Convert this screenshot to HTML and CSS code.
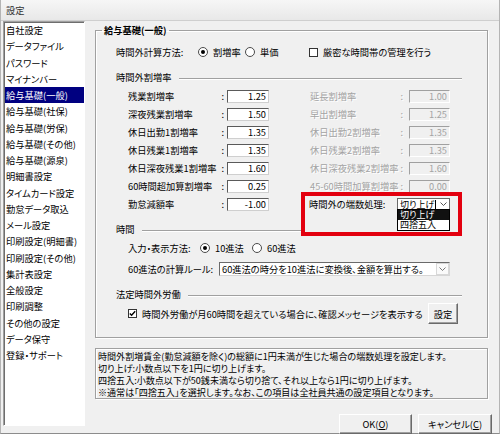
FILE: index.html
```html
<!DOCTYPE html>
<html lang="ja">
<head>
    <meta charset="UTF-8">
    <meta name="viewport" content="width=device-width, initial-scale=1.0">
    <title>設定</title>

    <link rel="stylesheet" href="styles.css">
</head>
<body>
<div class="window">
    <div class="titlebar">設定</div>

    <div class="content">
        <!-- 左側の設定メニュー -->
        <ul class="nav">
            <li>自社設定</li>
            <li>データファイル</li>
            <li>パスワード</li>
            <li>マイナンバー</li>
            <li class="active">給与基礎(一般)</li>
            <li>給与基礎(社保)</li>
            <li>給与基礎(労保)</li>
            <li>給与基礎(その他)</li>
            <li>給与基礎(源泉)</li>
            <li>明細書設定</li>
            <li>タイムカード設定</li>
            <li>勤怠データ取込</li>
            <li>メール設定</li>
            <li>印刷設定(明細書)</li>
            <li>印刷設定(その他)</li>
            <li>集計表設定</li>
            <li>全般設定</li>
            <li>印刷調整</li>
            <li>その他の設定</li>
            <li>データ保守</li>
            <li>登録・サポート</li>
        </ul>

        <div class="main">
            <fieldset class="group">
                <legend>給与基礎(一般)</legend>

                <div class="row method">
                    <span class="label">時間外計算方法:</span>
                    <span class="opt"><i class="radio on"></i>割増率</span>
                    <span class="opt"><i class="radio"></i>単価</span>
                    <span class="opt"><i class="check"></i>厳密な時間帯の管理を行う</span>
                </div>

                <div class="sub">時間外割増率</div>

                <div class="rates">
                    <span class="label">残業割増率<b>:</b></span>
                    <span class="num">1.25</span>
                    <span class="label off">延長割増率<b>:</b></span>
                    <span class="num off">1.00</span>

                    <span class="label">深夜残業割増率<b>:</b></span>
                    <span class="num">1.50</span>
                    <span class="label off">早出割増率<b>:</b></span>
                    <span class="num off">1.25</span>

                    <span class="label">休日出勤1割増率<b>:</b></span>
                    <span class="num">1.35</span>
                    <span class="label off">休日出勤2割増率<b>:</b></span>
                    <span class="num off">1.35</span>

                    <span class="label">休日残業1割増率<b>:</b></span>
                    <span class="num">1.35</span>
                    <span class="label off">休日残業2割増率<b>:</b></span>
                    <span class="num off">1.35</span>

                    <span class="label">休日深夜残業1割増率<b>:</b></span>
                    <span class="num">1.60</span>
                    <span class="label off">休日深夜残業2割増率<b>:</b></span>
                    <span class="num off">1.60</span>

                    <span class="label">60時間超加算割増率<b>:</b></span>
                    <span class="num">0.25</span>
                    <span class="label off">45-60時間加算割増率<b>:</b></span>
                    <span class="num off">0.00</span>

                    <span class="label">勤怠減額率<b>:</b></span>
                    <span class="num">-1.00</span>
                    <div class="round">
                        <span class="annot"></span>
                        <span class="round-label">時間外の端数処理:</span>
                        <div class="combo small">
                            <span class="val">切り上げ</span><i class="caret"></i>
                            <svg class="chev" width="7" height="4" viewBox="0 0 7 4"><polyline points="0.5,0.5 3.5,3.5 6.5,0.5" fill="none" stroke="#555" stroke-width="1"/></svg>
                            <ul class="droplist">
                                <li class="hl">切り上げ</li>
                                <li>四捨五入</li>
                            </ul>
                        </div>
                    </div>
                </div>

                <div class="sub">時間</div>

                <div class="row inputmode">
                    <span class="label">入力・表示方法:</span>
                    <span class="opt"><i class="radio on"></i>10進法</span>
                    <span class="opt"><i class="radio"></i>60進法</span>
                </div>

                <div class="row rule">
                    <span class="label">60進法の計算ルール:</span>
                    <div class="combo wide">
                        <span class="val">60進法の時分を10進法に変換後、金額を算出する。</span>
                        <span class="drop"><svg width="7" height="4" viewBox="0 0 7 4"><polyline points="0.5,0.5 3.5,3.5 6.5,0.5" fill="none" stroke="#777" stroke-width="1"/></svg></span>
                    </div>
                </div>

                <div class="sub">法定時間外労働</div>

                <div class="row legal">
                    <span class="opt"><i class="check on"><svg width="7" height="7" viewBox="0 0 7 7"><polyline points="0.8,3.4 2.6,5.2 6.2,1.2" fill="none" stroke="#000" stroke-width="1.4"/></svg></i>時間外労働が月60時間を超えている場合に、確認メッセージを表示する</span>
                    <button class="btn set">設定</button>
                </div>
            </fieldset>

            <div class="note">
                時間外割増賃金(勤怠減額を除く)の総額に1円未満が生じた場合の端数処理を設定します。<br>
                切り上げ:小数点以下を1円に切り上げます。<br>
                四捨五入:小数点以下が50銭未満なら切り捨て、それ以上なら1円に切り上げます。<br>
                ※通常は「四捨五入」を選択します。なお、この項目は全社員共通の設定項目となります。
            </div>

            <div class="actions">
                <button class="btn">OK(<u>O</u>)</button>
                <button class="btn">キャンセル(<u>C</u>)</button>
            </div>
        </div>
    </div>
</div>
</body>
</html>
```

FILE: styles.css
```css
* {
    box-sizing: border-box;
}

html, body {
    margin: 0;
    padding: 0;
}

body {
    width: 500px;
    height: 434px;
    overflow: hidden;
    background: #f0f0f0;
    color: #000;
    font-family: "Noto Sans CJK JP", sans-serif;
    font-size: 9.25px;
    font-feature-settings: "palt";
}

.window {
    height: 434px;
    border-left: 1px solid #b4b4b4;
    border-right: 1px solid #b4b4b4;
    border-bottom: 1px solid #8c8c8c;
}

.titlebar {
    height: 21px;
    padding-left: 5px;
    line-height: 20px;
    color: #333;
    background: linear-gradient(#f6f6f6, #e8e8e8);
    border-bottom: 1px solid #cfcfcf;
}

.content {
    display: flex;
}

/* 左メニュー */
.nav {
    width: 82px;
    height: 405px;
    margin: 0 0 0 2px;
    padding: 0;
    list-style: none;
    background: #fff;
    border: 1px solid;
    border-color: #a0a0a0 #fff #fff #a0a0a0;
    box-shadow: inset 1px 1px 0 #6e6e6e;
}

.nav li {
    height: 16.25px;
    line-height: 16.25px;
    margin-left: 1px;
    padding-left: 1px;
    white-space: nowrap;
}

.nav li.active {
    background: #000080;
    color: #fff;
}

.main {
    width: 397px;
    margin-left: 10px;
}

/* グループボックス */
.group {
    position: relative;
    margin: 3px 4px 0 0;
    padding: 0 0 13px;
    min-width: 0;
    border: 1px solid #a0a0a0;
    box-shadow: inset 1px 1px 0 #fff, 1px 1px 0 #fff;
}

.group legend {
    margin-left: 6px;
    padding: 0 2px;
    line-height: 12px;
    font-weight: bold;
}

.row {
    display: flex;
    align-items: center;
    height: 18px;
    margin-left: 32px;
    white-space: nowrap;
}

.opt {
    display: flex;
    align-items: center;
    gap: 5px;
}

.method {
    margin-top: 7px;
    margin-left: 20px;
}
.method .label {
    width: 82px;
}
.method .opt {
    width: 47px;
}
.method .opt:nth-child(3) {
    width: 64px;
}
.method .opt:last-child {
    width: auto;
}

.sub {
    display: flex;
    align-items: center;
    height: 18px;
    margin: 7px 25px 0 20px;
}

.sub::after {
    content: "";
    flex: 1;
    margin: 3px 0 0 7px;
    border-top: 1px solid #a0a0a0;
    border-bottom: 1px solid #fff;
}

.radio {
    display: flex;
    align-items: center;
    justify-content: center;
    width: 10px;
    height: 10px;
    border: 1px solid #4a4a4a;
    border-radius: 50%;
    background: #fff;
}

.radio.on::after {
    content: "";
    width: 4px;
    height: 4px;
    border-radius: 50%;
    background: #000;
}

.check {
    display: flex;
    align-items: center;
    justify-content: center;
    width: 9px;
    height: 9px;
    border: 1px solid #333;
    background: #fff;
}

/* 割増率 */
.rates {
    display: grid;
    grid-template-columns: 99px 83px 99px 41px;
    grid-auto-rows: 18px;
    margin: 1px 0 0 32px;
    white-space: nowrap;
}

.rates .label {
    display: flex;
    align-items: center;
    justify-content: space-between;
    padding-right: 3px;
}

.rates .label b {
    font-weight: normal;
}

.rates .label.off {
    padding-right: 6px;
}

.off {
    color: #a3a3a3;
    text-shadow: 1px 1px 0 #fff;
}

.num {
    display: flex;
    align-items: center;
    justify-content: flex-end;
    align-self: center;
    width: 42px;
    height: 13px;
    padding-right: 2px;
    background: #fff;
    border: 1px solid;
    border-color: #5a5a5a #cfcfcf #cfcfcf #5a5a5a;
}

.num.off {
    width: 41px;
    background: #f0f0f0;
    border-color: #a0a0a0 #fff #fff #a0a0a0;
    text-shadow: none;
}

.round {
    grid-column: 3 / 5;
    display: flex;
    align-items: center;
    position: relative;
}

/* 赤枠の注釈 */
.annot {
    position: absolute;
    left: -9px;
    top: -3px;
    width: 161px;
    height: 44px;
    border: 4px solid #e3000f;
    background: #f0f0f0;
}

.round-label {
    position: relative;
    z-index: 1;
    margin-left: -1px;
}

.combo {
    position: relative;
    z-index: 1;
    display: flex;
    align-items: center;
    background: #fff;
}

.combo.small {
    width: 53px;
    height: 12px;
    margin-left: auto;
    padding-left: 2px;
    font-size: 9px;
    border: 1px solid #6a6a6a;
}

.caret {
    width: 1px;
    height: 9px;
    margin-left: 1px;
    background: #000;
}

.chev {
    margin-left: auto;
    margin-right: 2px;
}

.droplist {
    position: absolute;
    top: 100%;
    left: -1px;
    width: 53px;
    margin: 0;
    padding: 0;
    list-style: none;
    background: #fff;
    border: 1px solid #000;
}

.droplist li {
    height: 10px;
    line-height: 10px;
    padding-left: 2px;
}

.droplist li.hl {
    background: #111;
    color: #fff;
}

.inputmode {
    margin-top: 1px;
}
.inputmode .label {
    width: 72px;
}
.inputmode .opt {
    width: 52px;
}

.rule {
    margin-top: 3px;
}
.rule .label {
    width: 91px;
}

.combo.wide {
    width: 231px;
    height: 14px;
    padding-left: 2px;
    border: 1px solid;
    border-color: #6a6a6a #d6d6d6 #d6d6d6 #6a6a6a;
}

.combo.wide .val {
    flex: 1;
}

.drop {
    display: flex;
    align-items: center;
    justify-content: center;
    width: 13px;
    height: 12px;
    border: 1px solid #d8d8d8;
    background: #fafafa;
}

.legal {
    height: 21px;
    margin: 0 29px 0 32px;
}

.btn {
    height: 20px;
    padding: 0;
    font: inherit;
    color: #000;
    background: #f0f0f0;
    border: 1px solid;
    border-color: #fff #6a6a6a #6a6a6a #fff;
    box-shadow: inset -1px -1px 0 #a0a0a0;
}

.btn u {
    text-underline-offset: 1px;
}

.btn.set {
    width: 30px;
    height: 21px;
    margin-left: auto;
}

/* 説明文 */
.note {
    margin: 10px 4px 0 0;
    height: 51px;
    padding: 2px 0 0 2px;
    font-size: 9.05px;
    line-height: 12px;
    white-space: nowrap;
    border: 1px solid #a0a0a0;
    box-shadow: inset 1px 1px 0 #fff, 1px 1px 0 #fff;
}

.actions {
    display: flex;
    justify-content: flex-end;
    gap: 6px;
    margin-top: 15px;
}

.actions .btn {
    width: 73px;
}

.actions .btn + .btn {
    width: 74px;
}
```
